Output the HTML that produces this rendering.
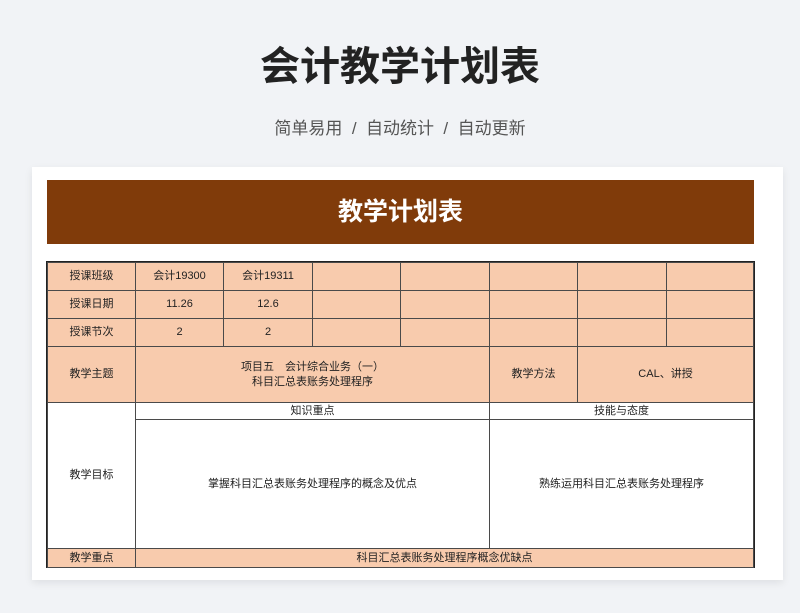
<!DOCTYPE html><html><head><meta charset="utf-8"><style>
body{margin:0;width:800px;height:613px;background:#f1f3f6;font-family:"Liberation Sans","Noto Sans CJK SC",sans-serif;position:relative;overflow:hidden}
.a{position:absolute}
h1{position:absolute;top:34px;left:0;width:800px;text-align:center;margin:0;font-size:40px;color:#222;font-weight:bold}
.sub{top:114px;left:0;width:800px;text-align:center;font-size:17px;color:#555}
.card{left:32px;top:167px;width:751px;height:413px;background:#fff;box-shadow:0 3px 8px rgba(0,0,0,.08)}
.hd{left:47px;top:180px;width:707px;height:64px;background:#803b0a;color:#fff;font-size:25px;font-weight:bold;text-align:center;line-height:64px}
.c{position:absolute;box-sizing:border-box;border:1.5px solid #4a4a4a;background:#f8cbad;font-size:11px;color:#222;display:flex;align-items:center;justify-content:center;text-align:center;line-height:15px}
.w{background:#fff}
</style></head><body>
<h1>会计教学计划表</h1>
<div class="a sub">简单易用 &nbsp;/&nbsp; 自动统计 &nbsp;/&nbsp; 自动更新</div>
<div class="a card"></div>
<div class="a hd">教学计划表</div>
<div class="a" style="left:46px;top:261px;width:709px;height:307px;border:1px solid #222;box-sizing:border-box"></div>
<div class="c" style="left:47px;top:262px;width:89px;height:29px">授课班级</div>
<div class="c" style="left:135px;top:262px;width:89px;height:29px">会计19300</div>
<div class="c" style="left:223px;top:262px;width:90px;height:29px">会计19311</div>
<div class="c" style="left:312px;top:262px;width:89px;height:29px"></div>
<div class="c" style="left:400px;top:262px;width:90px;height:29px"></div>
<div class="c" style="left:489px;top:262px;width:89px;height:29px"></div>
<div class="c" style="left:577px;top:262px;width:90px;height:29px"></div>
<div class="c" style="left:666px;top:262px;width:88px;height:29px"></div>
<div class="c" style="left:47px;top:290px;width:89px;height:29px">授课日期</div>
<div class="c" style="left:135px;top:290px;width:89px;height:29px">11.26</div>
<div class="c" style="left:223px;top:290px;width:90px;height:29px">12.6</div>
<div class="c" style="left:312px;top:290px;width:89px;height:29px"></div>
<div class="c" style="left:400px;top:290px;width:90px;height:29px"></div>
<div class="c" style="left:489px;top:290px;width:89px;height:29px"></div>
<div class="c" style="left:577px;top:290px;width:90px;height:29px"></div>
<div class="c" style="left:666px;top:290px;width:88px;height:29px"></div>
<div class="c" style="left:47px;top:318px;width:89px;height:29px">授课节次</div>
<div class="c" style="left:135px;top:318px;width:89px;height:29px">2</div>
<div class="c" style="left:223px;top:318px;width:90px;height:29px">2</div>
<div class="c" style="left:312px;top:318px;width:89px;height:29px"></div>
<div class="c" style="left:400px;top:318px;width:90px;height:29px"></div>
<div class="c" style="left:489px;top:318px;width:89px;height:29px"></div>
<div class="c" style="left:577px;top:318px;width:90px;height:29px"></div>
<div class="c" style="left:666px;top:318px;width:88px;height:29px"></div>
<div class="c" style="left:47px;top:346px;width:89px;height:57px">教学主题</div>
<div class="c" style="left:135px;top:346px;width:355px;height:57px">项目五　会计综合业务（一）<br>科目汇总表账务处理程序</div>
<div class="c" style="left:489px;top:346px;width:89px;height:57px">教学方法</div>
<div class="c" style="left:577px;top:346px;width:177px;height:57px">CAL、讲授</div>
<div class="c w" style="left:47px;top:402px;width:89px;height:147px">教学目标</div>
<div class="c w" style="left:135px;top:402px;width:355px;height:18px">知识重点</div>
<div class="c w" style="left:489px;top:402px;width:265px;height:18px">技能与态度</div>
<div class="c w" style="left:135px;top:419px;width:355px;height:130px">掌握科目汇总表账务处理程序的概念及优点</div>
<div class="c w" style="left:489px;top:419px;width:265px;height:130px">熟练运用科目汇总表账务处理程序</div>
<div class="c" style="left:47px;top:548px;width:89px;height:20px">教学重点</div>
<div class="c" style="left:135px;top:548px;width:619px;height:20px">科目汇总表账务处理程序概念优缺点</div>
</body></html>
